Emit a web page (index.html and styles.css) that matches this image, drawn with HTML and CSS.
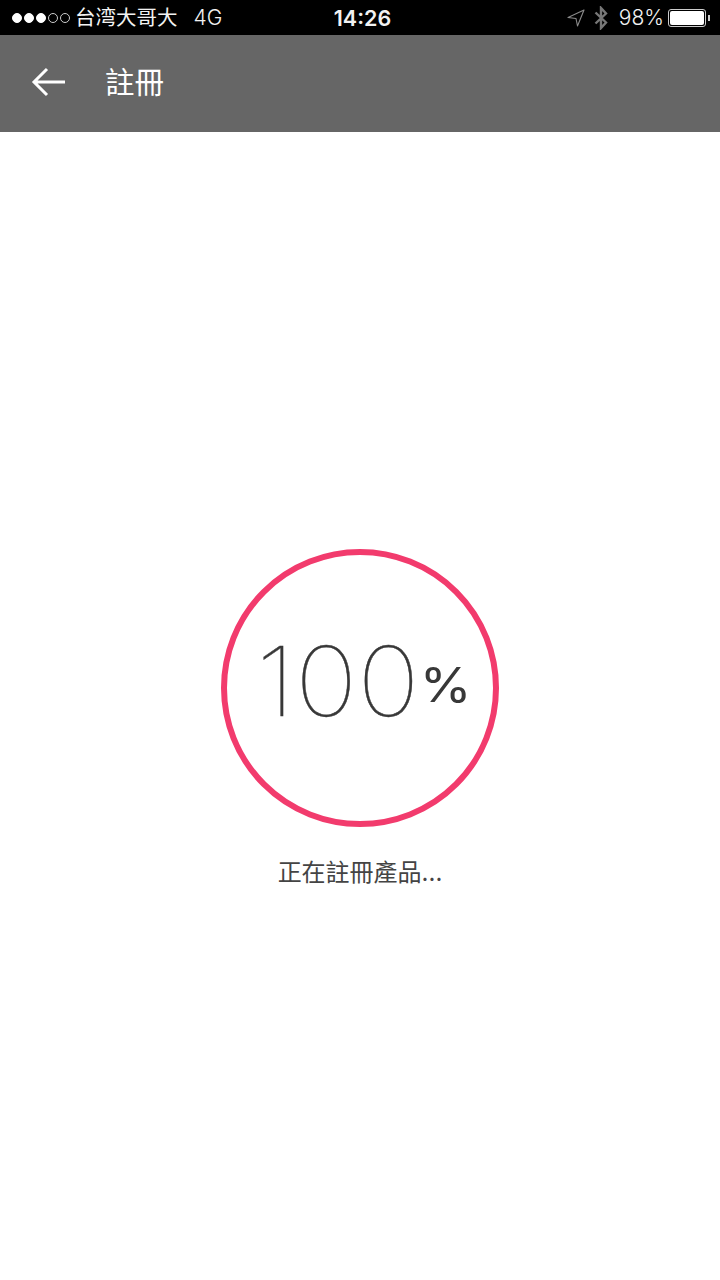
FILE: index.html
```html
<!DOCTYPE html>
<html lang="zh-Hant">
<head>
    <meta charset="UTF-8">
    <meta name="viewport" content="width=device-width, initial-scale=1.0">
    <title>註冊</title>
    <link rel="stylesheet" href="styles.css">
</head>
<body>
    <!-- Status bar -->
    <div class="status-bar">
        <div class="status-left">
            <div class="signal">
                <span class="dot on"></span>
                <span class="dot on"></span>
                <span class="dot on"></span>
                <span class="dot"></span>
                <span class="dot"></span>
            </div>
            <span class="carrier">台湾大哥大</span>
            <span class="network">4G</span>
        </div>
        <div class="clock">14:26</div>
        <div class="status-right">
            <svg class="icon-location" viewBox="0 0 18 18" width="18" height="18">
                <path d="M17 1 L1 8.5 L9 9.5 L10.5 17 Z" fill="none" stroke="#8a8a8a" stroke-width="1.1" stroke-linejoin="round"/>
            </svg>
            <svg class="icon-bluetooth" viewBox="0 0 14 24" width="14" height="24">
                <path d="M1.5 6.5 L12 16.5 L7 22 L7 2 L12 7.5 L1.5 17.5" fill="none" stroke="#777" stroke-width="2.4"/>
            </svg>
            <span class="percent">98%</span>
            <div class="battery"><div class="battery-level"></div></div>
            <div class="battery-tip"></div>
        </div>
    </div>

    <!-- Toolbar -->
    <div class="toolbar">
        <svg class="back" viewBox="0 0 36 30" width="36" height="30">
            <path d="M34 15 H3 M16 2 L3 15 L16 28" fill="none" stroke="#fff" stroke-width="3"/>
        </svg>
        <h1 class="title">註冊</h1>
    </div>

    <!-- Progress -->
    <div class="content">
        <div class="progress-ring">
            <div class="progress-text"><span class="value">100</span><span class="unit">%</span></div>
        </div>
        <div class="message">正在註冊產品...</div>
    </div>
</body>
</html>
```

FILE: styles.css
```css
/* Global Styles */
body {
    margin: 0;
    width: 720px;
    height: 1280px;
    overflow: hidden;
    background: #fff;
    font-family: 'Inter', 'Noto Sans CJK TC', sans-serif;
}

/* Status bar */
.status-bar {
    height: 35px;
    background: #000;
    color: #f2f2f2;
    display: flex;
    align-items: center;
    justify-content: space-between;
    padding: 0 10px 0 12px;
    font-size: 21px;
    position: relative;
}

.status-left {
    display: flex;
    align-items: center;
}

.signal {
    display: flex;
    gap: 2px;
    margin-right: 5px;
}

.dot {
    width: 10px;
    height: 10px;
    border: 1px solid #ccc;
    border-radius: 50%;
    box-sizing: border-box;
}

.dot.on {
    background: #fff;
    border-color: #fff;
}

.carrier {
    font-size: 20.5px;
    margin-bottom: 3px;
}

.network {
    margin-left: 16px;
    font-weight: 300;
}

.clock {
    position: absolute;
    left: 0;
    right: 0;
    text-align: center;
    font-size: 21.5px;
    font-weight: 600;
    padding-left: 5px;
}

.status-right {
    display: flex;
    align-items: center;
}

.icon-location {
    margin-right: 9px;
}

.icon-bluetooth {
    margin-right: 11px;
}

.percent {
    margin-right: 4px;
    font-weight: 300;
}

.battery {
    width: 34px;
    height: 14px;
    border: 1px solid #ccc;
    border-radius: 3px;
    padding: 1px;
}

.battery-level {
    width: 100%;
    height: 100%;
    background: #fff;
    border-radius: 2px;
}

.battery-tip {
    width: 2px;
    height: 6px;
    margin-left: 2px;
    background: #ccc;
}

/* Toolbar */
.toolbar {
    height: 97px;
    background: #666;
    display: flex;
    align-items: center;
    padding-left: 31px;
}

.back {
    margin-right: 38px;
    margin-bottom: 4px;
}

.title {
    margin: 0 0 8px;
    color: #fff;
    font-size: 29.5px;
    font-weight: 400;
}

/* Progress */
.content {
    display: flex;
    flex-direction: column;
    align-items: center;
    padding-top: 417px;
}

.progress-ring {
    width: 278px;
    height: 278px;
    box-sizing: border-box;
    border: 6px solid #f23b6d;
    border-radius: 50%;
    padding-left: 8px;
    text-align: center;
    line-height: 252px;
    color: #383838;
    white-space: nowrap;
}

/* digits in the reference are wider than Inter's, so stretch them a bit */
.progress-text {
    display: inline-block;
    transform: scaleX(1.1);
}

.value {
    font-size: 96px;
    font-weight: 125;
    -webkit-text-stroke: 0.4px #383838;
}

.unit {
    font-size: 48px;
    font-weight: 400;
    vertical-align: 14px;
}

.message {
    margin-top: 26px;
    color: #444;
    font-size: 24px;
}
```
